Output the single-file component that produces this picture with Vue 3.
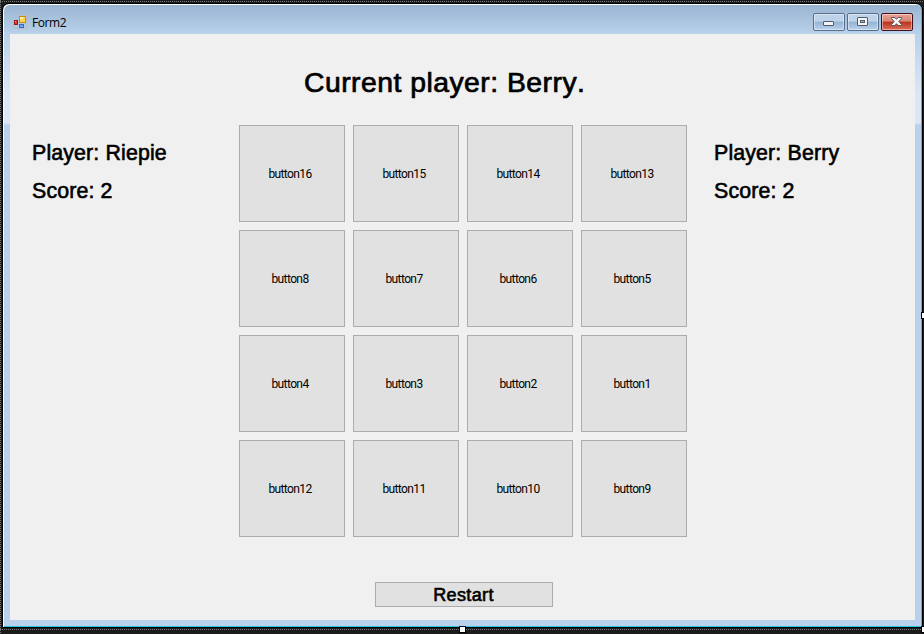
<script setup>
const tiles = [16, 15, 14, 13, 8, 7, 6, 5, 4, 3, 2, 1, 12, 11, 10, 9]
const players = [
  { name: 'Riepie', score: 2, side: 'left' },
  { name: 'Berry', score: 2, side: 'right' },
]
</script>

<template>
  <div class="designer">
    <div class="window">
      <header class="titlebar">
        <svg class="form-icon" width="14" height="14" viewBox="0 0 14 14" shape-rendering="crispEdges">
          <rect x=".5" y=".5" width="13" height="13" fill="none" stroke="#b5bdc9" />
          <rect x="1" y="5" width="4" height="5" fill="#d53c24" />
          <rect x="1.5" y="5.5" width="3" height="4" fill="none" stroke="#a51712" />
          <rect x="2" y="6" width="1" height="1" fill="#f2a08c" />
          <rect x="6" y="1" width="7" height="7" fill="#c88d10" />
          <rect x="7" y="2" width="5" height="5" fill="#ffd54a" />
          <rect x="7" y="2" width="3" height="2" fill="#fff0a5" />
          <rect x="6" y="9" width="5" height="4" fill="#3868ca" />
          <rect x="7" y="10" width="3" height="2" fill="#75a4f4" />
        </svg>
        <span class="title">Form2</span>
        <div class="controls">
          <span class="control">
            <svg width="30" height="16" viewBox="0 0 30 16"><rect x="9.5" y="7.5" width="10" height="4" rx=".5" fill="#f4f4f4" stroke="#525c69" /></svg>
          </span>
          <span class="control">
            <svg width="30" height="16" viewBox="0 0 30 16"><rect x="9.5" y="3.5" width="10" height="8" rx=".5" fill="#f4f4f4" stroke="#525c69" /><rect x="12.5" y="6.5" width="4" height="2" fill="#91b4d8" stroke="#525c69" /></svg>
          </span>
          <span class="control close">
            <svg width="30" height="16" viewBox="0 0 30 16"><path d="M9.5 3.5h3.4l1.6 1.8 1.6-1.8h3.4v1l-2.7 3 2.7 3v1h-3.4l-1.6-1.8-1.6 1.8H9.5v-1l2.7-3-2.7-3z" fill="#f5f5f5" stroke="#545764" /></svg>
          </span>
        </div>
      </header>

      <main class="client">
        <h1 class="heading">Current player: Berry.</h1>
        <div class="game">
          <section v-for="p in players" :key="p.name" class="player" :class="p.side">
            <p>Player: {{ p.name }}</p>
            <p>Score: {{ p.score }}</p>
          </section>
          <div class="board">
            <button v-for="n in tiles" :key="n" class="tile">button{{ n }}</button>
          </div>
        </div>
        <button class="restart"><span>Restart</span></button>
      </main>
    </div>
    <i class="handle east"></i>
    <i class="handle south"></i>
    <i class="handle corner"></i>
  </div>
</template>

<style>
body { background: #1c1c1c; overflow: hidden; }
</style>

<style scoped>
.designer {
  position: relative;
  box-sizing: border-box;
  width: 924px;
  height: 634px;
  padding: 3px 1px 5px 2px;
  overflow: hidden;
  background:
    repeating-linear-gradient(90deg, #777 0 1px, transparent 1px 2px) 0 1px / 100% 1px no-repeat,
    repeating-linear-gradient(90deg, #777 0 1px, transparent 1px 2px) 0 629px / 100% 1px no-repeat,
    repeating-linear-gradient(#777 0 1px, transparent 1px 2px) 0 0 / 1px 100% no-repeat,
    #1c1c1c;
}
.window {
  box-sizing: border-box;
  width: 921px;
  height: 625px;
  border: 1px solid #000;
  border-radius: 7px 7px 0 0;
  padding: 0 6px;
  background:
    linear-gradient(#99b4d1 0, #b9d1ea 30px, #dce7f5 90px, #dce7f5 119px, #b9d1ea 121px);
  box-shadow: inset 1px 1px #fff, inset -1px -1px #29c8e0;
}
.titlebar {
  display: flex;
  height: 30px;
  padding-left: 4px;
}
.form-icon { margin-top: 11px; flex: none; }
.title {
  margin: 10px 0 0 5px;
  font: 12px/17px "Open Sans", sans-serif;
  letter-spacing: -.4px;
  color: #000;
}
.controls { display: flex; gap: 2px; margin: 9px 3px 0 auto; }
.control {
  box-sizing: border-box;
  width: 32px;
  height: 18px;
  border: 1px solid #586e8d;
  border-radius: 2px;
  background: linear-gradient(#bed3e9 0 45%, #94b2d3 50%, #b9d2ed);
  box-shadow: inset 0 0 0 1px #ffffff70;
}
.control svg { display: block; }
.close {
  border-color: #43101a;
  background: linear-gradient(#e8a496 0, #d98372 45%, #b8321c 50%, #d9705a);
}
.client {
  display: flex;
  flex-direction: column;
  height: 586px;
  margin: 0 1px;
  background: #f0f0f0;
  color: #000;
}
.heading {
  margin: 31px 0 0 294px;
  font: 27px/36px "Liberation Sans", Arial, sans-serif;
  font-kerning: none;
  letter-spacing: .45px;
  transform: scaleX(1.05);
  transform-origin: left;
  -webkit-text-stroke: .7px #000;
  white-space: nowrap;
}
.game {
  display: grid;
  grid-template-columns: 180px 448px 1fr;
  column-gap: 27px;
  margin-top: 24px;
  padding-left: 22px;
}
.player { grid-row: 1; padding-top: 15px; }
.left { grid-column: 1; }
.right { grid-column: 3; }
.player p {
  margin: 0 0 12px;
  font: 21.33px/26px "Liberation Sans", Arial, sans-serif;
  font-kerning: none;
  letter-spacing: .15px;
  -webkit-text-stroke: .6px #000;
  white-space: nowrap;
}
.board {
  grid-column: 2;
  grid-row: 1;
  display: grid;
  grid-template-columns: repeat(4, 106px);
  grid-auto-rows: 97px;
  gap: 8px;
}
.tile, .restart {
  box-sizing: border-box;
  padding: 0;
  border: 1px solid #adadad;
  border-radius: 0;
  background: #e1e1e1;
  color: #000;
}
.tile {
  padding-right: 4px;
  font: 12px/14px Roboto, sans-serif;
  letter-spacing: -.6px;
}
.restart {
  width: 178px;
  height: 25px;
  margin: 45px 0 0 365px;
  padding: 2px 1px 0 0;
  font: 18px/21px "Liberation Sans", Arial, sans-serif;
  letter-spacing: .35px;
  -webkit-text-stroke: .6px #000;
}
.handle {
  position: absolute;
  width: 5px;
  height: 5px;
  background: #fff;
  border: 1px solid #000;
}
.east { left: 921px; top: 312px; }
.south { left: 459px; top: 626px; }
.corner { left: 921px; top: 626px; }
</style>
